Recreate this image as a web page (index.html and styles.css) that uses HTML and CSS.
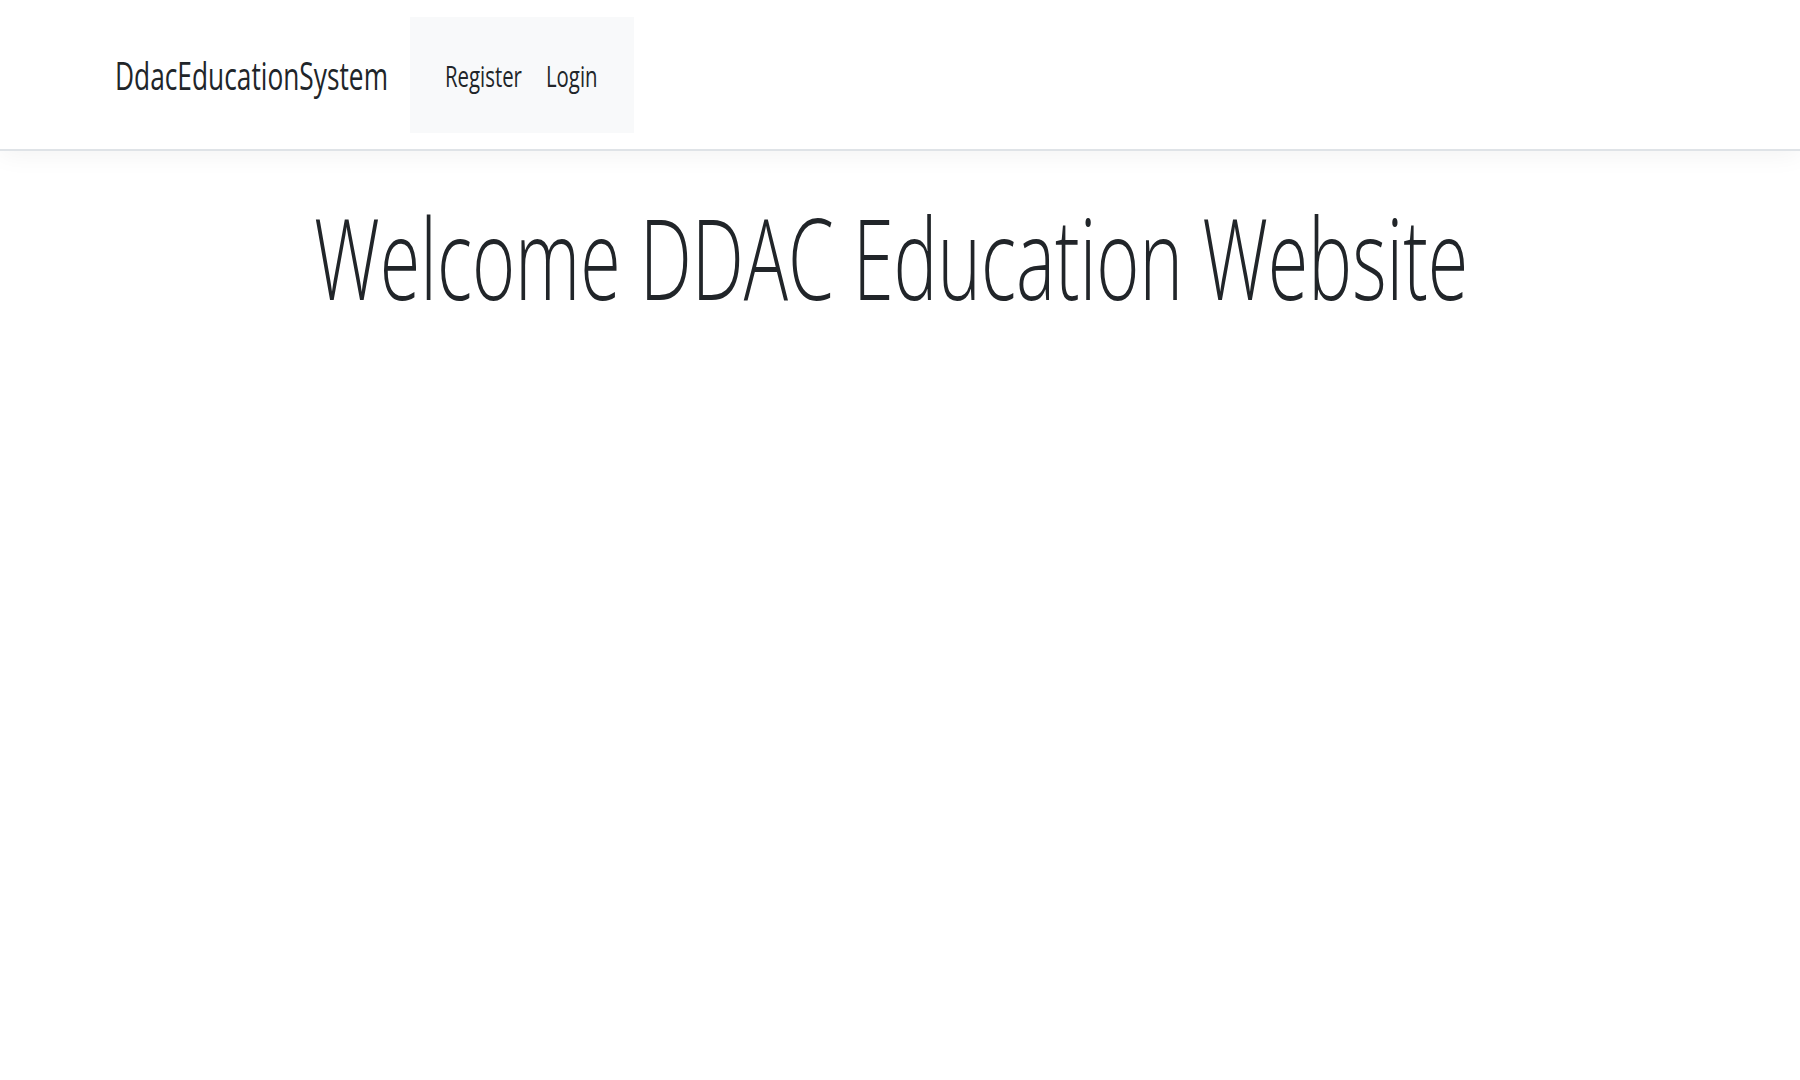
FILE: index.html
```html
<!DOCTYPE html>
<html>
<head>
<meta charset="utf-8">
<link rel="stylesheet" href="styles.css">
<title>DdacEducationSystem</title>
</head>
<body>
<header class="site-header">
  <div class="header-inner">
    <a class="brand" href="#"><span class="squeeze-brand">DdacEducationSystem</span></a>
    <nav class="nav-box">
      <a class="nav-link nav-register" href="#"><span class="squeeze-nav">Register</span></a>
      <a class="nav-link" href="#"><span class="squeeze-nav">Login</span></a>
    </nav>
  </div>
</header>
<main class="content">
  <h1 class="welcome"><span class="squeeze-big">Welcome DDAC Education Website</span></h1>
</main>
</body>
</html>
```

FILE: styles.css
```css
html, body {
  margin: 0;
  padding: 0;
  background: #ffffff;
  font-family: "Open Sans", "Noto Sans", sans-serif;
  color: #212529;
}

.site-header {
  height: 149px;
  border-bottom: 2px solid #dfe3e7;
  box-shadow: 0 4px 24px rgba(0, 0, 0, 0.05);
  background: #fff;
  box-sizing: content-box;
}

.header-inner {
  display: flex;
  align-items: flex-start;
  padding-left: 115px;
}

.brand {
  flex: 0 0 295px;
  min-width: 0;
  text-decoration: none;
  color: #212529;
  font-size: 38.5px;
  line-height: 1;
  margin-top: 56px;
  white-space: nowrap;
}

.nav-box {
  flex: 0 0 224px;
  min-width: 0;
  margin-top: 17px;
  background: #f8f9fa;
  height: 116px;
  display: flex;
  align-items: flex-start;
  padding-left: 35px;
  box-sizing: border-box;
}

.nav-link {
  text-decoration: none;
  color: #212529;
  font-size: 29.5px;
  line-height: 1;
  margin-top: 44px;
  white-space: nowrap;
}

.nav-register {
  flex: 0 0 101px;
  min-width: 0;
}

.squeeze-brand {
  display: inline-block;
  transform: scaleX(0.683);
  transform-origin: left center;
}

.squeeze-nav {
  display: inline-block;
  transform: scaleX(0.69);
  transform-origin: left center;
}

.content {
  text-align: center;
  padding-right: 17px;
}

.welcome {
  margin: 0;
  padding-top: 38px;
  font-weight: 300;
  font-size: 113px;
  line-height: 1.2;
  white-space: nowrap;
}

.squeeze-big {
  display: inline-block;
  transform: scaleX(0.652);
  transform-origin: center center;
}
```
